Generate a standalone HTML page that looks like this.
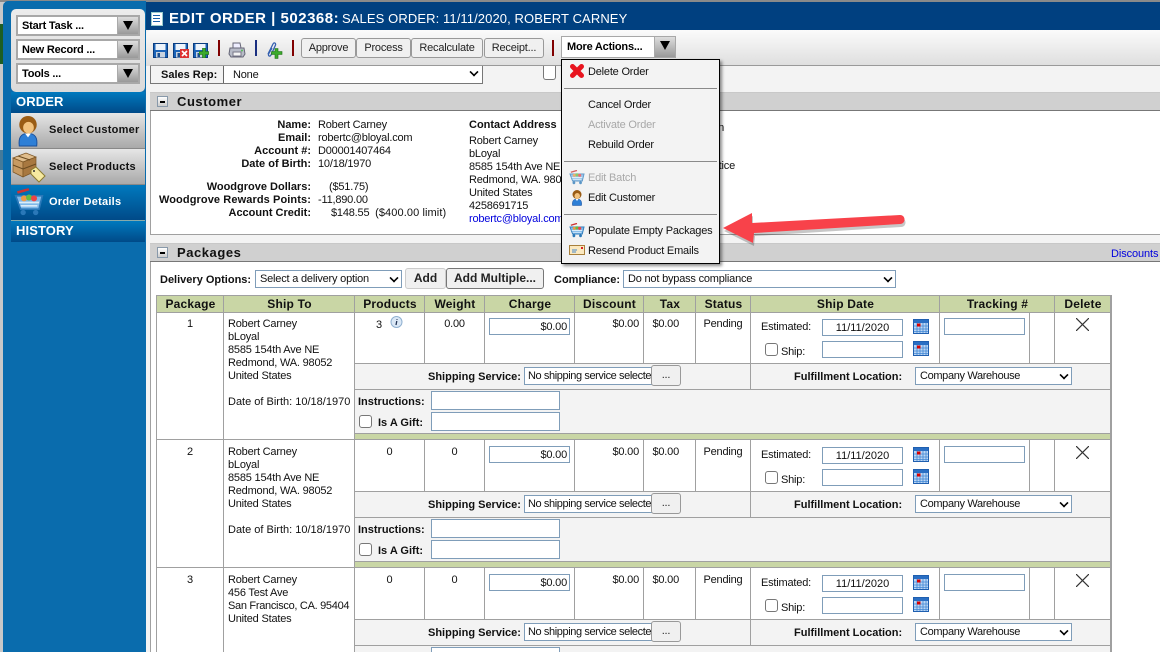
<!DOCTYPE html>
<html><head><meta charset="utf-8"><title>Edit Order</title>
<style>
html,body{margin:0;padding:0;width:1160px;height:652px;overflow:hidden;background:#f3f3f3}
body{position:relative;font-family:"Liberation Sans",Arial,sans-serif;font-size:11px;letter-spacing:-.2px;color:#111}
div,svg,span.a{position:absolute}
.t{white-space:nowrap;line-height:14px;height:14px;margin-top:1px}
.b{font-weight:bold;letter-spacing:0}
.r{text-align:right}.c{text-align:center}
.dd{background:#fff;border:2px solid #a8a8a8;box-sizing:border-box}
.dd i{position:absolute;right:0;top:0;bottom:0;width:20px;background:linear-gradient(#ddd,#999);border-left:1px solid #aaa}
.dd i:after{content:"";position:absolute;left:5px;top:4px;border:5px solid transparent;border-top:9px solid #000;border-bottom:0}
.dd b{position:absolute;left:4px;top:2px;font-size:11px;line-height:14px;color:#000;letter-spacing:-.2px;white-space:nowrap}
.btn{border:1px solid #999;border-radius:3px;background:#f0f0f0;box-sizing:border-box;text-align:center;line-height:18px;color:#222;white-space:nowrap}
.hd{left:150px;width:1010px;height:19px;background:#d0d0d0;border-bottom:1px solid #777;border-top:1px solid #c8c8c8;box-sizing:border-box}
.hd b{position:absolute;left:27px;top:1px;font-size:13px;line-height:16px;letter-spacing:.55px;color:#111}
.pm{left:7px;top:3px;width:11px;height:11px;background:linear-gradient(#fff,#ccc);border:1px solid #89a;box-sizing:border-box}
.pm:after{content:"";position:absolute;left:2px;top:4px;width:5px;height:2px;background:#000}
.box{background:#fff;border:1px solid #a0a0a0;box-sizing:border-box}
.in{background:#fff;border:1px solid #7f9db9;box-sizing:border-box;line-height:16px;white-space:nowrap;overflow:hidden;color:#111}
.chev{position:absolute;width:6px;height:6px;border:solid #000;border-width:0 2px 2px 0;transform:rotate(45deg) scale(.8)}
.cb{background:#fff;border:1px solid #777;border-radius:3px;box-sizing:border-box;width:13px;height:13px}
.th{top:295px;height:18px;background:#c9d6a5;border:1px solid #a0a0a0;border-right:0;box-sizing:border-box;text-align:center;font-weight:bold;font-size:12px;line-height:16px;letter-spacing:.2px;color:#111}
.v{background:#a0a0a0;width:1px}
.h{background:#a0a0a0;height:1px}
.pk{left:0;top:0;width:1160px;height:652px}
.m{white-space:nowrap;left:588px;line-height:14px;letter-spacing:-.2px;color:#111}
.sb{left:11px;width:134px}
.g{background:linear-gradient(#e6e6e6,#a9a9a9)}
.bl{background:linear-gradient(#0079be,#004a88)}
.sb b{position:absolute;left:38px;font-size:11px;line-height:14px;letter-spacing:.25px;color:#111;white-space:nowrap}
.st{position:absolute;left:5px;color:#fff;font-size:13px;font-weight:bold;line-height:16px;letter-spacing:.1px}
.ss{letter-spacing:-.4px}.wh{letter-spacing:-.35px}.d0{letter-spacing:0}
</style></head><body>
<svg width="0" height="0" style="left:0;top:0"><defs>
<symbol id="save" viewBox="0 0 15 15"><rect x=".5" y=".5" width="14" height="14" fill="#1c64b8" stroke="#0b3d80"/><rect x="2.5" y="1" width="10" height="6" fill="#eef4fb"/><rect x="3" y="9" width="9" height="5.5" fill="#c9d3df"/><rect x="4.5" y="10" width="2.5" height="4" fill="#1c4f90"/></symbol>
<symbol id="cal" viewBox="0 0 16 15"><rect x=".5" y=".5" width="15" height="14" fill="#bcd6f4" stroke="#1f5fb0"/><rect x="1" y="1" width="14" height="3" fill="#2a6fc4"/><path d="M1 7h14M1 10h14M1 12.500h14M4 4v10M7 4v10M10 4v10M13 4v10" stroke="#3f86d4" stroke-width=".8"/><rect x="4" y="4.500" width="3.500" height="3" fill="#d80000"/></symbol>
<symbol id="cart" viewBox="0 0 18 16"><path d="M1 4h16l-2 8H4z" fill="#7fb8e8" stroke="#2a78b8"/><path d="M2 2L9 0" stroke="#c33" stroke-width="1.500"/><circle cx="6" cy="5.500" r="1.800" fill="#e94"/><circle cx="9" cy="5" r="1.800" fill="#6b4"/><circle cx="12" cy="5.500" r="1.800" fill="#e44"/><path d="M3 8h12M4 10h10" stroke="#d8ecfa"/><circle cx="5.500" cy="14" r="1.600" fill="#2a78b8"/><circle cx="13" cy="14" r="1.600" fill="#2a78b8"/></symbol>
<symbol id="person" viewBox="0 0 20 32"><path d="M1 31c-1-8 1-13 9-13s10 5 9 13z" fill="#2e7fd6" stroke="#1a4f9a"/><path d="M7 18l3 4 3-4z" fill="#fff"/><circle cx="10" cy="9" r="9" fill="#9a5c14"/><ellipse cx="10.500" cy="12" rx="5.500" ry="6" fill="#f2c27e"/></symbol>
</defs></svg>

<!-- frame -->
<div style="left:0;top:0;width:4px;height:652px;background:#c8c8c8"></div>
<div style="left:0;top:24px;width:3px;height:40px;background:#1d5e23"></div>
<div style="left:0;top:150px;width:3px;height:20px;background:#447a9a"></div>
<div style="left:0;top:0;width:1160px;height:2px;background:#8a8a8a"></div>
<div style="left:3px;top:1px;width:143px;height:651px;background:#0a6cad;border-radius:5px 0 0 0"></div>
<div style="left:146px;top:2px;width:1014px;height:28px;background:#004080"></div>

<!-- sidebar -->
<div style="left:11px;top:9px;width:134px;height:83px;background:linear-gradient(#ececec,#dadada);border-radius:5px 5px 5px 5px"></div>
<div class="dd" style="left:16px;top:15px;width:124px;height:21px"><b>Start Task ...</b><i></i></div>
<div class="dd" style="left:16px;top:39px;width:124px;height:21px"><b>New Record ...</b><i></i></div>
<div class="dd" style="left:16px;top:63px;width:124px;height:21px"><b>Tools ...</b><i></i></div>
<div class="sb bl" style="top:92px;height:21px"><span class="st" style="top:2px">ORDER</span></div>
<div class="sb g" style="top:113px;height:36px;border-bottom:1px solid #888;box-sizing:border-box"><b style="top:10px">Select Customer</b>
<svg style="left:7px;top:3px" width="20" height="31"><use href="#person"/></svg></div>
<div class="sb g" style="top:149px;height:36px;border-bottom:1px solid #888;box-sizing:border-box"><b style="top:11px">Select Products</b>
<svg style="left:1px;top:2px" width="34" height="32" viewBox="0 0 34 32"><path d="M1 7L14 2l10 4-13 5z" fill="#e0bd8c" stroke="#7a5424" stroke-width=".7"/><path d="M1 7l10 4v15L1 21z" fill="#c79a62" stroke="#7a5424" stroke-width=".7"/><path d="M11 11l13-5v14l-13 6z" fill="#a87840" stroke="#7a5424" stroke-width=".7"/><path d="M1 14l10 4 13-5M6 5l12 4" fill="none" stroke="#6a4a20"/><path d="M19 19l5-3 9 9-6 6-8-8z" fill="#f6eaa0" stroke="#8a7a30"/><circle cx="22" cy="20" r="1" fill="#333"/></svg></div>
<div class="sb bl" style="top:185px;height:35px"><b style="top:10px;color:#fff">Order Details</b>
<svg style="left:3px;top:3px" width="30" height="29" viewBox="0 0 18 17"><use href="#cart"/></svg></div>
<div style="left:11px;top:220px;width:134px;height:1px;background:#8aa"></div>
<div class="sb bl" style="top:221px;height:21px"><span class="st" style="top:2px">HISTORY</span></div>

<!-- title -->
<div style="left:151px;top:12px;width:10px;height:12px;background:#fff;border:1px solid #9cc"></div>
<div style="left:153px;top:15px;width:7px;height:1px;background:#1860a8;box-shadow:0 3px 0 #1860a8,0 6px 0 #1860a8"></div>
<div class="t" style="left:169px;top:9px;height:17px;line-height:17px;font-size:15px;font-weight:bold;letter-spacing:.5px;color:#fff">EDIT ORDER | 502368:</div>
<div class="t" style="left:342px;top:9px;height:17px;line-height:17px;font-size:13px;letter-spacing:.1px;color:#fff">SALES ORDER: 11/11/2020, ROBERT CARNEY</div>

<!-- toolbar -->
<div style="left:146px;top:30px;width:1014px;height:36px;background:linear-gradient(#fbfbfb,#dedede);border-radius:6px 0 0 0"></div>
<div style="left:150px;top:65px;width:1010px;height:1px;background:#999"></div>
<svg style="left:153px;top:43px" width="15" height="15"><use href="#save"/></svg>
<svg style="left:173px;top:43px" width="15" height="15"><use href="#save"/></svg>
<svg style="left:180px;top:49px" width="9" height="9" viewBox="0 0 9 9"><rect width="9" height="9" fill="#d33"/><path d="M2 2l5 5M7 2l-5 5" stroke="#fff" stroke-width="1.600"/></svg>
<svg style="left:193px;top:43px" width="15" height="15"><use href="#save"/></svg>
<svg style="left:199px;top:48px" width="10" height="10" viewBox="0 0 10 10"><path d="M3.500 0h3v3.500H10v3H6.500V10h-3V6.500H0v-3h3.500z" fill="#3caa2c" stroke="#1c6a14" stroke-width=".6"/></svg>
<div style="left:218px;top:40px;width:2px;height:16px;background:#800000"></div>
<svg style="left:228px;top:42px" width="18" height="16" viewBox="0 0 18 16"><path d="M5 1h7l1 5H5z" fill="#eef" stroke="#667"/><path d="M2 6h14l1 6-2 3H3l-2-3z" fill="#b8bcc8" stroke="#667"/><rect x="5" y="10" width="8" height="4" fill="#f4f4f4" stroke="#778"/><circle cx="14" cy="8.500" r="1" fill="#5b5"/></svg>
<div style="left:255px;top:40px;width:2px;height:16px;background:#1a2f80"></div>
<svg style="left:265px;top:42px" width="18" height="17" viewBox="0 0 18 17"><path d="M3 12L8 2c1-2 3-1 2.500 1L6 13c-1 2-3 1-2.500-1L7 6" fill="none" stroke="#3560b0" stroke-width="1.300"/><path d="M10 6.500h3v3h4v3h-4v4h-3v-4H6.500v-3H10z" fill="#3caa2c" stroke="#1c6a14" stroke-width=".6"/></svg>
<div style="left:292px;top:40px;width:2px;height:16px;background:#800000"></div>
<div class="a btn" style="position:absolute;left:301px;top:38px;width:55px;height:20px">Approve</div>
<div class="a btn" style="position:absolute;left:356px;top:38px;width:55px;height:20px">Process</div>
<div class="a btn" style="position:absolute;left:411px;top:38px;width:72px;height:20px">Recalculate</div>
<div class="a btn" style="position:absolute;left:484px;top:38px;width:60px;height:20px">Receipt...</div>
<div style="left:552px;top:40px;width:2px;height:16px;background:#800000"></div>
<div class="dd" style="left:561px;top:36px;width:115px;height:22px;border-width:1px"><b style="left:5px;top:3px">More Actions...</b><i></i></div>

<!-- sales rep -->
<div style="left:150px;top:66px;width:333px;height:18px;background:#fff;border:solid #777;border-width:0 1px 1px 1px;box-sizing:border-box"></div>
<div style="left:151px;top:66px;width:72px;height:17px;background:#f3f3f3;border-right:1px solid #666"></div>
<div class="t b" style="left:161px;top:67px">Sales Rep:</div>
<div class="t" style="left:233px;top:67px">None</div>
<div class="chev" style="left:470px;top:68px"></div>
<div style="left:543px;top:66px;width:13px;height:14px;background:#fff;border:1px solid #777;border-top:0;border-radius:0 0 3px 3px;box-sizing:border-box"></div>

<!-- customer -->
<div class="hd" style="top:92px"><div class="pm"></div><b>Customer</b></div>
<div class="box" style="left:150px;top:111px;width:1011px;height:124px;border-top:0"></div>
<div class="t b r" style="right:849px;top:117px">Name:</div><div class="t" style="left:318px;top:117px">Robert Carney</div>
<div class="t b r" style="right:849px;top:130px">Email:</div><div class="t" style="left:318px;top:130px">robertc@bloyal.com</div>
<div class="t b r" style="right:849px;top:143px">Account #:</div><div class="t" style="left:318px;top:143px">D00001407464</div>
<div class="t b r" style="right:849px;top:156px">Date of Birth:</div><div class="t" style="left:318px;top:156px">10/18/1970</div>
<div class="t b r" style="right:849px;top:179px">Woodgrove Dollars:</div><div class="t" style="left:329px;top:179px">($51.75)</div>
<div class="t b r" style="right:849px;top:192px;letter-spacing:.1px">Woodgrove Rewards Points:</div><div class="t" style="left:318px;top:192px">-11,890.00</div>
<div class="t b r" style="right:849px;top:205px">Account Credit:</div><div class="t" style="left:331px;top:205px">$148.55&nbsp; <span style="letter-spacing:.1px">($400.00 limit)</span></div>
<div class="t b" style="left:469px;top:117px">Contact Address</div>
<div class="t" style="left:469px;top:133px">Robert Carney</div>
<div class="t" style="left:469px;top:146px">bLoyal</div>
<div class="t" style="left:469px;top:159px">8585 154th Ave NE</div>
<div class="t" style="left:469px;top:172px">Redmond, WA. 98052</div>
<div class="t" style="left:469px;top:185px">United States</div>
<div class="t" style="left:469px;top:198px">4258691715</div>
<div class="t" style="left:469px;top:211px;color:#0000dd">robertc@bloyal.com</div>
<div class="t r" style="right:436px;top:120px">Information</div>
<div class="t r" style="right:425px;top:158px">Notice</div>

<!-- packages -->
<div class="hd" style="top:243px"><div class="pm"></div><b>Packages</b></div>
<div class="t" style="left:1111px;top:246px;color:#0000dd;letter-spacing:-.1px">Discounts</div>
<div style="left:150px;top:262px;width:1011px;height:390px;background:#fff;border-left:1px solid #a0a0a0;box-sizing:border-box"></div>
<div class="t b" style="left:160px;top:272px">Delivery Options:</div>
<div class="in" style="left:255px;top:270px;width:147px;height:18px;padding-left:4px">Select a delivery option<div class="chev" style="left:134px;top:3px"></div></div>
<div class="btn" style="left:405px;top:268px;width:41px;height:21px;border-color:#ccc;line-height:19px;font-size:12px;font-weight:bold;letter-spacing:0">Add</div>
<div class="btn" style="left:446px;top:268px;width:98px;height:21px;border-color:#777;line-height:19px;font-size:12px;font-weight:bold;letter-spacing:0">Add Multiple...</div>
<div class="t b" style="left:554px;top:272px">Compliance:</div>
<div class="in" style="left:623px;top:270px;width:273px;height:18px;padding-left:4px">Do not bypass compliance<div class="chev" style="left:260px;top:3px"></div></div>

<div class="th" style="left:156px;width:68px">Package</div>
<div class="th" style="left:223px;width:132px">Ship To</div>
<div class="th" style="left:354px;width:71px">Products</div>
<div class="th" style="left:424px;width:61px">Weight</div>
<div class="th" style="left:484px;width:91px">Charge</div>
<div class="th" style="left:574px;width:70px">Discount</div>
<div class="th" style="left:643px;width:53px">Tax</div>
<div class="th" style="left:695px;width:56px">Status</div>
<div class="th" style="left:750px;width:190px">Ship Date</div>
<div class="th" style="left:939px;width:116px">Tracking #</div>
<div class="th" style="left:1054px;width:57px">Delete</div>

<!-- table grid -->
<div class="v" style="left:156px;top:295px;height:357px"></div>
<div class="v" style="left:223px;top:295px;height:357px"></div>
<div class="v" style="left:354px;top:295px;height:357px"></div>
<div style="left:1110px;top:295px;width:2px;height:357px;background:#a0a0a0"></div>

<!-- ROW 1 -->
<div class="pk" style="top:0">
<div style="left:355px;top:363px;width:755px;height:70px;background:#f3f3f3"></div>
<div style="left:355px;top:433px;width:755px;height:6px;background:#c9d6a5"></div>
<div class="h" style="left:355px;top:363px;width:755px"></div><div class="h" style="left:355px;top:389px;width:755px"></div><div class="h" style="left:355px;top:433px;width:755px"></div>
<div class="h" style="left:156px;top:439px;width:955px"></div>
<div class="v" style="left:424px;top:312px;height:51px"></div><div class="v" style="left:484px;top:312px;height:51px"></div><div class="v" style="left:574px;top:312px;height:51px"></div><div class="v" style="left:643px;top:312px;height:51px"></div><div class="v" style="left:695px;top:312px;height:51px"></div><div class="v" style="left:750px;top:312px;height:77px"></div><div class="v" style="left:939px;top:312px;height:51px"></div><div class="v" style="left:1029px;top:312px;height:51px"></div><div class="v" style="left:1054px;top:312px;height:51px"></div>
<div class="t c" style="left:157px;width:66px;top:316px">1</div>
<div class="t" style="left:228px;top:316px">Robert Carney</div><div class="t" style="left:228px;top:329px">bLoyal</div><div class="t" style="left:228px;top:342px">8585 154th Ave NE</div><div class="t" style="left:228px;top:355px">Redmond, WA. 98052</div><div class="t" style="left:228px;top:368px">United States</div><div class="t d0" style="left:228px;top:394px">Date of Birth: 10/18/1970</div>
<div class="t" style="left:376px;top:317px">3</div>
<svg style="left:390px;top:316px" width="13" height="13" viewBox="0 0 13 13"><circle cx="6.500" cy="6" r="5.500" fill="#dbe8f6" stroke="#8fb0d0"/><path d="M7 3v.8M6.800 5L6 9" stroke="#235" stroke-width="1.300"/></svg>
<div class="t c" style="left:425px;width:59px;top:316px">0.00</div>
<div class="in r" style="left:489px;top:318px;width:81px;height:17px;padding-right:2px">$0.00</div>
<div class="t r" style="right:521px;top:316px">$0.00</div><div class="t r" style="right:481px;top:316px">$0.00</div>
<div class="t c" style="left:696px;width:54px;top:316px">Pending</div>
<div class="t" style="left:761px;top:319px">Estimated:</div>
<div class="in c d0" style="left:822px;top:319px;width:81px;height:17px">11/11/2020</div>
<svg style="left:913px;top:319px" width="16" height="15"><use href="#cal"/></svg>
<div class="cb" style="left:765px;top:343px"></div><div class="t" style="left:781px;top:344px">Ship:</div>
<div class="in" style="left:822px;top:341px;width:81px;height:17px"></div>
<svg style="left:913px;top:341px" width="16" height="15"><use href="#cal"/></svg>
<div class="in" style="left:944px;top:318px;width:81px;height:17px"></div>
<svg style="left:1076px;top:318px" width="13" height="13" viewBox="0 0 13 13"><path d="M0 0l13 13M13 0L0 13" stroke="#333" stroke-width="1.200"/></svg>
<div class="t b" style="left:428px;top:369px">Shipping Service:</div>
<div class="in ss" style="left:524px;top:367px;width:130px;height:18px;padding-left:3px">No shipping service selecte</div>
<div class="btn" style="left:651px;top:365px;width:30px;height:21px;line-height:19px">...</div>
<div class="t b" style="left:794px;top:369px">Fulfillment Location:</div>
<div class="in wh" style="left:915px;top:367px;width:157px;height:18px;padding-left:4px">Company Warehouse<div class="chev" style="left:144px;top:3px"></div></div>
<div class="t b" style="left:358px;top:394px">Instructions:</div>
<div class="in" style="left:431px;top:391px;width:129px;height:19px"></div>
<div class="cb" style="left:359px;top:415px"></div><div class="t b" style="left:378px;top:415px">Is A Gift:</div>
<div class="in" style="left:431px;top:412px;width:129px;height:19px"></div>
</div>

<!-- ROW 2 -->
<div class="pk" style="top:128px;height:524px">
<div style="left:355px;top:363px;width:755px;height:70px;background:#f3f3f3"></div>
<div style="left:355px;top:433px;width:755px;height:6px;background:#c9d6a5"></div>
<div class="h" style="left:355px;top:363px;width:755px"></div><div class="h" style="left:355px;top:389px;width:755px"></div><div class="h" style="left:355px;top:433px;width:755px"></div>
<div class="h" style="left:156px;top:439px;width:955px"></div>
<div class="v" style="left:424px;top:312px;height:51px"></div><div class="v" style="left:484px;top:312px;height:51px"></div><div class="v" style="left:574px;top:312px;height:51px"></div><div class="v" style="left:643px;top:312px;height:51px"></div><div class="v" style="left:695px;top:312px;height:51px"></div><div class="v" style="left:750px;top:312px;height:77px"></div><div class="v" style="left:939px;top:312px;height:51px"></div><div class="v" style="left:1029px;top:312px;height:51px"></div><div class="v" style="left:1054px;top:312px;height:51px"></div>
<div class="t c" style="left:157px;width:66px;top:316px">2</div>
<div class="t" style="left:228px;top:316px">Robert Carney</div><div class="t" style="left:228px;top:329px">bLoyal</div><div class="t" style="left:228px;top:342px">8585 154th Ave NE</div><div class="t" style="left:228px;top:355px">Redmond, WA. 98052</div><div class="t" style="left:228px;top:368px">United States</div><div class="t d0" style="left:228px;top:394px">Date of Birth: 10/18/1970</div>
<div class="t c" style="left:355px;width:69px;top:316px">0</div>
<div class="t c" style="left:425px;width:59px;top:316px">0</div>
<div class="in r" style="left:489px;top:318px;width:81px;height:17px;padding-right:2px">$0.00</div>
<div class="t r" style="right:521px;top:316px">$0.00</div><div class="t r" style="right:481px;top:316px">$0.00</div>
<div class="t c" style="left:696px;width:54px;top:316px">Pending</div>
<div class="t" style="left:761px;top:319px">Estimated:</div>
<div class="in c d0" style="left:822px;top:319px;width:81px;height:17px">11/11/2020</div>
<svg style="left:913px;top:319px" width="16" height="15"><use href="#cal"/></svg>
<div class="cb" style="left:765px;top:343px"></div><div class="t" style="left:781px;top:344px">Ship:</div>
<div class="in" style="left:822px;top:341px;width:81px;height:17px"></div>
<svg style="left:913px;top:341px" width="16" height="15"><use href="#cal"/></svg>
<div class="in" style="left:944px;top:318px;width:81px;height:17px"></div>
<svg style="left:1076px;top:318px" width="13" height="13" viewBox="0 0 13 13"><path d="M0 0l13 13M13 0L0 13" stroke="#333" stroke-width="1.200"/></svg>
<div class="t b" style="left:428px;top:369px">Shipping Service:</div>
<div class="in ss" style="left:524px;top:367px;width:130px;height:18px;padding-left:3px">No shipping service selecte</div>
<div class="btn" style="left:651px;top:365px;width:30px;height:21px;line-height:19px">...</div>
<div class="t b" style="left:794px;top:369px">Fulfillment Location:</div>
<div class="in wh" style="left:915px;top:367px;width:157px;height:18px;padding-left:4px">Company Warehouse<div class="chev" style="left:144px;top:3px"></div></div>
<div class="t b" style="left:358px;top:394px">Instructions:</div>
<div class="in" style="left:431px;top:391px;width:129px;height:19px"></div>
<div class="cb" style="left:359px;top:415px"></div><div class="t b" style="left:378px;top:415px">Is A Gift:</div>
<div class="in" style="left:431px;top:412px;width:129px;height:19px"></div>
</div>

<!-- ROW 3 -->
<div class="pk" style="top:256px;height:396px;overflow:hidden">
<div style="left:355px;top:363px;width:755px;height:70px;background:#f3f3f3"></div>
<div class="h" style="left:355px;top:363px;width:755px"></div><div class="h" style="left:355px;top:389px;width:755px"></div>
<div class="v" style="left:424px;top:312px;height:51px"></div><div class="v" style="left:484px;top:312px;height:51px"></div><div class="v" style="left:574px;top:312px;height:51px"></div><div class="v" style="left:643px;top:312px;height:51px"></div><div class="v" style="left:695px;top:312px;height:51px"></div><div class="v" style="left:750px;top:312px;height:77px"></div><div class="v" style="left:939px;top:312px;height:51px"></div><div class="v" style="left:1029px;top:312px;height:51px"></div><div class="v" style="left:1054px;top:312px;height:51px"></div>
<div class="t c" style="left:157px;width:66px;top:316px">3</div>
<div class="t" style="left:228px;top:316px">Robert Carney</div><div class="t" style="left:228px;top:329px">456 Test Ave</div><div class="t" style="left:228px;top:342px;letter-spacing:-.3px">San Francisco, CA. 95404</div><div class="t" style="left:228px;top:355px">United States</div>
<div class="t c" style="left:355px;width:69px;top:316px">0</div>
<div class="t c" style="left:425px;width:59px;top:316px">0</div>
<div class="in r" style="left:489px;top:318px;width:81px;height:17px;padding-right:2px">$0.00</div>
<div class="t r" style="right:521px;top:316px">$0.00</div><div class="t r" style="right:481px;top:316px">$0.00</div>
<div class="t c" style="left:696px;width:54px;top:316px">Pending</div>
<div class="t" style="left:761px;top:319px">Estimated:</div>
<div class="in c d0" style="left:822px;top:319px;width:81px;height:17px">11/11/2020</div>
<svg style="left:913px;top:319px" width="16" height="15"><use href="#cal"/></svg>
<div class="cb" style="left:765px;top:343px"></div><div class="t" style="left:781px;top:344px">Ship:</div>
<div class="in" style="left:822px;top:341px;width:81px;height:17px"></div>
<svg style="left:913px;top:341px" width="16" height="15"><use href="#cal"/></svg>
<div class="in" style="left:944px;top:318px;width:81px;height:17px"></div>
<svg style="left:1076px;top:318px" width="13" height="13" viewBox="0 0 13 13"><path d="M0 0l13 13M13 0L0 13" stroke="#333" stroke-width="1.200"/></svg>
<div class="t b" style="left:428px;top:369px">Shipping Service:</div>
<div class="in ss" style="left:524px;top:367px;width:130px;height:18px;padding-left:3px">No shipping service selecte</div>
<div class="btn" style="left:651px;top:365px;width:30px;height:21px;line-height:19px">...</div>
<div class="t b" style="left:794px;top:369px">Fulfillment Location:</div>
<div class="in wh" style="left:915px;top:367px;width:157px;height:18px;padding-left:4px">Company Warehouse<div class="chev" style="left:144px;top:3px"></div></div>
<div class="in" style="left:431px;top:391px;width:129px;height:5px;border-bottom:0"></div>
</div>

<!-- menu -->
<div style="left:561px;top:59px;width:159px;height:205px;background:#f3f3f3;border:1px solid #000;box-sizing:border-box;box-shadow:2px 2px 3px rgba(0,0,0,.45)"></div>
<svg style="left:569px;top:63px" width="16" height="16" viewBox="0 0 16 16"><path d="M3.500 3.500l9 9M12.500 3.500l-9 9" stroke="#e8141e" stroke-width="5" stroke-linecap="round"/></svg>
<div class="t m" style="top:64px">Delete Order</div>
<div class="h" style="left:564px;top:88px;width:153px;background:#8a8a8a"></div>
<div class="t m" style="top:97px">Cancel Order</div>
<div class="t m" style="top:117px;color:#a8a8a8">Activate Order</div>
<div class="t m" style="top:137px">Rebuild Order</div>
<div class="h" style="left:564px;top:161px;width:153px;background:#8a8a8a"></div>
<svg style="left:569px;top:170px;opacity:.75" width="16" height="15" viewBox="0 0 18 17"><use href="#cart"/></svg>
<div class="t m" style="top:170px;color:#a8a8a8">Edit Batch</div>
<svg style="left:571px;top:190px" width="12" height="16" viewBox="0 0 20 32"><use href="#person"/></svg>
<div class="t m" style="top:190px">Edit Customer</div>
<div class="h" style="left:564px;top:214px;width:153px;background:#8a8a8a"></div>
<svg style="left:569px;top:223px" width="16" height="15" viewBox="0 0 18 17"><use href="#cart"/></svg>
<div class="t m" style="top:223px">Populate Empty Packages</div>
<svg style="left:569px;top:245px" width="16" height="10" viewBox="0 0 16 10"><rect x=".5" y=".5" width="15" height="9" fill="#fbe9c0" stroke="#a8803c"/><rect x="12" y="2" width="2" height="2" fill="#d22"/><path d="M3 5h5M3 7h4" stroke="#48c"/></svg>
<div class="t m" style="top:243px">Resend Product Emails</div>

<!-- arrow -->
<svg style="left:715px;top:205px;overflow:visible" width="200" height="45" viewBox="0 0 200 45">
<path d="M8 23L37 8v10l148-8c6 0 6 9 0 9L39 28l-1 10z" fill="#000" opacity=".22" transform="translate(1 3)"/>
<path d="M8 23L37 8v10l148-8c6 0 6 9 0 9L39 28l-1 10z" fill="#f8424a"/></svg>
</body></html>
